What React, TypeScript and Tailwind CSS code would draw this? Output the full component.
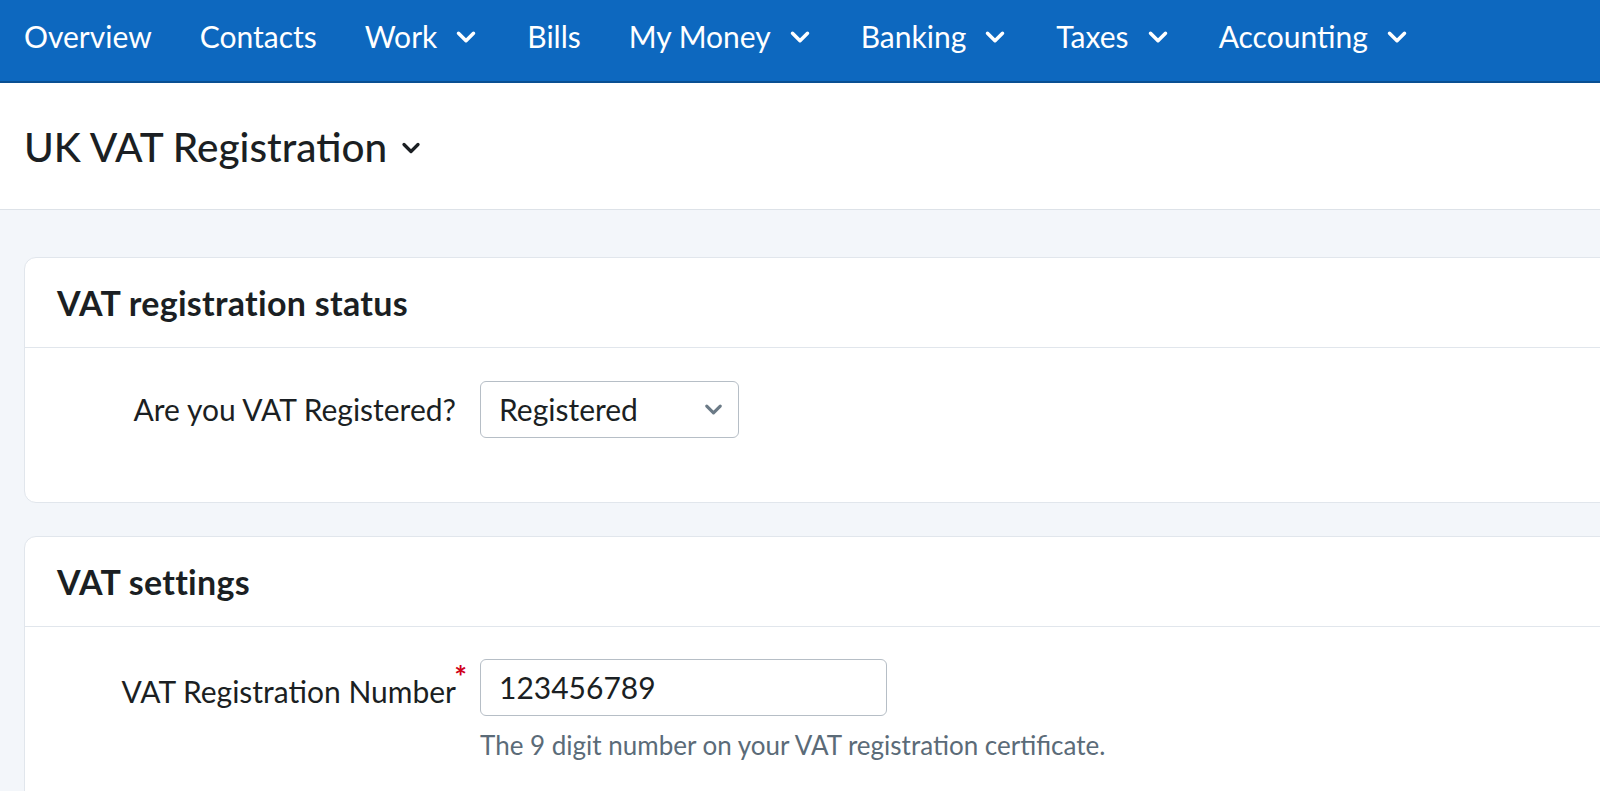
import { ChevronDown } from 'lucide-react';

const navItems = [
  { label: 'Overview', menu: false },
  { label: 'Contacts', menu: false },
  { label: 'Work', menu: true },
  { label: 'Bills', menu: false },
  { label: 'My Money', menu: true },
  { label: 'Banking', menu: true },
  { label: 'Taxes', menu: true },
  { label: 'Accounting', menu: true },
];

const font = { fontFamily: 'Lato, "Open Sans", sans-serif' };

function Card({ title, children }: { title: string; children: React.ReactNode }) {
  return (
    <section className="mr-[-20px] bg-white border border-[#e1e6ec] rounded-[12px]">
      <div className="h-[90px] flex items-center px-8 border-b border-[#e1e6ec]">
        <h2 className="text-[34px] font-bold text-[#1b1f23] tracking-[0.3px]">{title}</h2>
      </div>
      {children}
    </section>
  );
}

export default function App() {
  return (
    <div className="w-full h-[791px] overflow-hidden bg-[#f3f6fa]" style={font}>
      {/* top nav */}
      <nav className="h-[83px] bg-[#0d68bf] border-b-2 border-[#0a4f92] flex items-center pl-6 gap-[48px] pb-[8px]">
        {navItems.map((item) => (
          <div key={item.label} className="flex items-center gap-[14px] text-white text-[30px]">
            <span>{item.label}</span>
            {item.menu && <ChevronDown className="w-[30px] h-[30px] -mr-[2px]" strokeWidth={2.8} />}
          </div>
        ))}
      </nav>

      {/* page header */}
      <header className="h-[127px] bg-white border-b border-[#dde2e8] flex items-center pl-6 pt-[2px]">
        <h1 className="text-[40.5px] text-[#1b1f23] font-medium">UK VAT Registration</h1>
        <ChevronDown className="w-[28px] h-[28px] ml-[10px] mt-[2px] text-[#1b1f23]" strokeWidth={2.8} />
      </header>

      <main className="pl-6 pt-[47px] flex flex-col gap-[33px]">
        <Card title="VAT registration status">
          <div className="grid grid-cols-[431px_1fr] pt-[33px] pb-[64px]">
            <label className="text-right text-[30px] text-[#1b1f23] self-center">Are you VAT Registered?</label>
            <div className="ml-[24px]">
              <div className="w-[259px] h-[57px] border border-[#b6bec6] rounded-[6px] flex items-center justify-between pl-[18px] pr-[11px] text-[30px] text-[#1b1f23]">
                <span>Registered</span>
                <ChevronDown className="w-[27px] h-[27px] text-[#6b7a86]" strokeWidth={2.8} />
              </div>
            </div>
          </div>
        </Card>

        <Card title="VAT settings">
          <div className="grid grid-cols-[431px_1fr] pt-[32px] pb-[40px]">
            <label className="text-right text-[30px] text-[#1b1f23] self-start mt-[10px] relative">
              VAT Registration Number
              <span className="absolute -right-[11px] -top-[8px] text-[#d0021b] text-[30px] font-bold leading-none">*</span>
            </label>
            <div className="ml-[24px]">
              <div className="w-[407px] h-[57px] border border-[#b6bec6] rounded-[6px] flex items-center pl-[18px] text-[30px] text-[#1b1f23]">
                123456789
              </div>
              <p className="mt-[10px] text-[26px] text-[#5b6b78]">The 9 digit number on your VAT registration certificate.</p>
            </div>
          </div>
        </Card>
      </main>
    </div>
  );
}
